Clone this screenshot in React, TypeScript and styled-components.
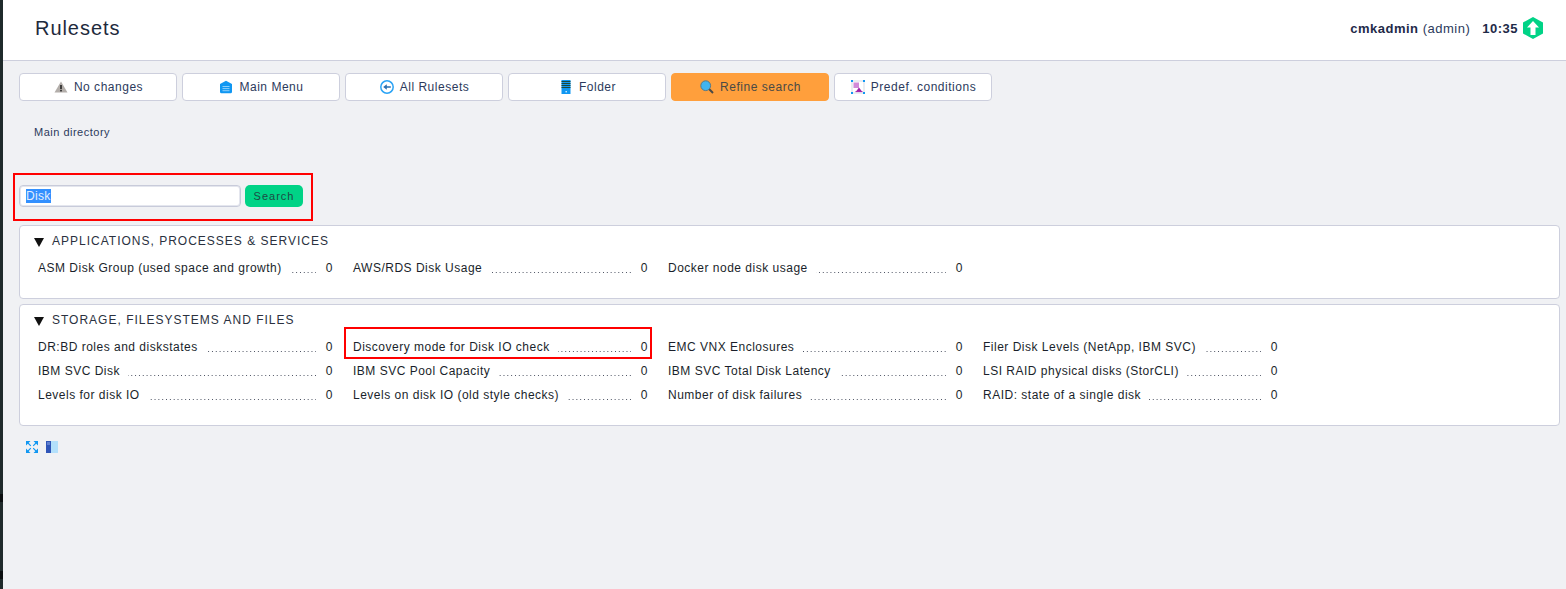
import React, { FC, useEffect, useRef } from "react";
import styled, { createGlobalStyle } from "styled-components";

const GlobalStyle = createGlobalStyle`
  html, body {
    margin: 0;
    padding: 0;
    height: 100%;
    background: #f0f1f4;
    font-family: "Liberation Sans", Arial, sans-serif;
    overflow: hidden;
  }
`;

const Page = styled.div`
  display: flex;
  height: 589px;
`;

const Strip = styled.div`
  width: 3px;
  flex: none;
  background: linear-gradient(
    to bottom,
    #1f2a2b 0 494px,
    #0b0f10 494px 502px,
    #1f2a2b 502px 571px,
    #0b0f10 571px 579px,
    #1f2a2b 579px
  );
`;

const Main = styled.div`
  flex: 1;
  min-width: 0;
  display: flex;
  flex-direction: column;
`;

const Header = styled.header`
  height: 56px;
  box-sizing: content-box;
  background: #fff;
  border-bottom: 1px solid #cdcfdd;
  display: flex;
  align-items: center;
  justify-content: space-between;
  padding: 0 23px 4px 32px;
`;

const Title = styled.h1`
  margin: 0;
  font-size: 20px;
  font-weight: 400;
  letter-spacing: 0.95px;
  color: #1e2a3c;
`;

const UserInfo = styled.div`
  display: flex;
  align-items: center;
  font-size: 13px;
  letter-spacing: 0.5px;
  color: #1e2a48;
`;

const UserName = styled.span`
  b {
    font-weight: 700;
  }
  span {
    color: #2c3a5c;
  }
`;

const Clock = styled.b`
  margin-left: 12px;
  font-weight: 700;
`;

const Badge = styled.svg`
  margin-left: 5px;
  width: 20px;
  height: 22px;
`;

const Content = styled.div`
  padding: 12px 6px 0 16px;
`;

const Toolbar = styled.nav`
  display: flex;
  gap: 5px;
`;

const ToolButton = styled.button<{ $active?: boolean }>`
  width: 158px;
  height: 28px;
  box-sizing: border-box;
  padding: 0 0 0 1px;
  display: flex;
  align-items: center;
  justify-content: center;
  gap: 6px;
  border-radius: 4px;
  border: 1px solid ${(p) => (p.$active ? "#ff9f3c" : "#cdcfdd")};
  background: ${(p) => (p.$active ? "#ff9f3c" : "#fff")};
  color: ${(p) => (p.$active ? "#4a4a46" : "#2c3a5c")};
  font-family: inherit;
  font-size: 12px;
  letter-spacing: 0.52px;
`;

const Breadcrumb = styled.div`
  margin: 25px 0 0 15px;
  height: 13px;
  line-height: 13px;
  font-size: 11px;
  letter-spacing: 0.5px;
  color: #2c3a5c;
`;

const SearchForm = styled.form`
  position: relative;
  display: flex;
  gap: 4px;
  margin: 46px 0 18px;
  width: 284px;

  &::after {
    content: "";
    position: absolute;
    left: -6px;
    top: -12px;
    width: 300px;
    height: 48px;
    box-sizing: border-box;
    border: 2px solid #f00;
    pointer-events: none;
  }
`;

const SearchInput = styled.input`
  width: 222px;
  height: 22px;
  box-sizing: border-box;
  padding: 0 6px;
  border: 1px solid #c8cbda;
  box-shadow: inset 0 0 0 1px #e4e6ee;
  border-radius: 4px;
  outline: none;
  background: #fff;
  font-family: inherit;
  font-size: 12px;
  letter-spacing: 0.3px;
  color: #2c3a5c;

  &::selection {
    background: #3390ff;
    color: #e4eefc;
  }
`;

const SearchButton = styled.button`
  width: 58px;
  height: 22px;
  padding: 0;
  border: none;
  border-radius: 5px;
  background: #00d386;
  color: #1d4a44;
  font-family: inherit;
  font-size: 11px;
  letter-spacing: 1px;
`;

const Section = styled.section<{ $height: number }>`
  box-sizing: border-box;
  height: ${(p) => p.$height}px;
  margin-bottom: 5px;
  padding: 8px 18px 0;
  background: #fff;
  border: 1px solid #cdcfdd;
  border-radius: 4px;
`;

const SectionTitle = styled.h2`
  margin: 0;
  display: flex;
  align-items: center;
  height: 14px;
  margin-left: -4px;
  font-size: 12px;
  font-weight: 400;
  letter-spacing: 1px;
  text-transform: uppercase;
  color: #2a3140;
`;

const Arrow = styled.svg`
  width: 10px;
  height: 9px;
  margin-right: 8px;
  margin-top: 2px;
`;

const RuleGrid = styled.div`
  display: grid;
  grid-template-columns: repeat(4, 295px);
  column-gap: 20px;
  grid-auto-rows: 24px;
  margin-top: 13px;
`;

const Rule = styled.a<{ $marked?: boolean }>`
  position: relative;
  display: flex;
  align-items: center;
  height: 14px;
  font-size: 12px;
  letter-spacing: 0.5px;
  color: #1a1f2b;
  white-space: nowrap;

  ${(p) =>
    p.$marked &&
    `
    &::after {
      content: "";
      position: absolute;
      left: -9px;
      top: -13px;
      width: 308px;
      height: 32px;
      box-sizing: border-box;
      border: 2px solid #f00;
    }
  `}
`;

const Leader = styled.span`
  flex: 1;
  min-width: 0;
  height: 14px;
  margin: 0 9px 0 8px;
  background-image: linear-gradient(to left, #4a5060 1.3px, transparent 1.3px);
  background-size: 3.83px 1px;
  background-repeat: repeat-x;
  background-position: right 0 top 11px;
`;

const Count = styled.span`
  width: 8px;
  flex: none;
  text-align: right;
`;

const Footer = styled.div`
  display: flex;
  gap: 8px;
  margin: 15px 0 0 7px;
`;

const Icon = styled.svg`
  width: 14px;
  height: 14px;
  flex: none;
`;

const SmallIcon = styled.svg`
  width: 12px;
  height: 12px;
  flex: none;
`;

const WarningIcon = () => (
  <Icon viewBox="0 0 14 14">
    <path d="M7 1.500 13.500 12.500H.5Z" fill="#b3aeaa" />
    <rect x="6.200" y="5" width="1.600" height="4" fill="#222" />
    <rect x="6.200" y="9.800" width="1.600" height="1.600" fill="#222" />
  </Icon>
);

const MenuIcon = () => (
  <Icon viewBox="0 0 14 14">
    <path d="M7 .8 13 4v8a1.400 1.400 0 0 1-1.400 1.200H2.400A1.400 1.400 0 0 1 1 12V4Z" fill="#1097f2" />
    <path d="M3.500 6.500h7M3.500 8.600h7M3.500 10.700h7" stroke="#8fd0fa" strokeWidth="1" />
  </Icon>
);

const BackIcon = () => (
  <Icon viewBox="0 0 14 14">
    <circle cx="7" cy="7" r="6.200" fill="#fff" stroke="#2aa3f5" strokeWidth="1.500" />
    <path d="M3.200 7 6.800 4.200v2h4v1.600h-4v2Z" fill="#2a6fb0" />
  </Icon>
);

const FolderIcon = () => (
  <Icon viewBox="0 0 14 14">
    <rect x="2.500" y="0" width="9" height="14" fill="#1097f2" />
    <path d="M2.500 1.500h9M2.500 3.500h9M2.500 5.500h9M2.500 7.500h9" stroke="#1f4a3a" strokeWidth="1" />
    <rect x="6.500" y="11" width="1.400" height="1.400" fill="#d8f0ff" />
  </Icon>
);

const SearchIcon = () => (
  <Icon viewBox="0 0 14 14">
    <path d="m8.800 8.800 4.200 4.200" stroke="#4a4a46" strokeWidth="2" />
    <circle cx="5.700" cy="5.700" r="4.900" fill="#41b4f0" stroke="#5a7a86" strokeWidth="1" />
  </Icon>
);

const PredefIcon = () => (
  <Icon viewBox="0 0 14 14">
    <rect x="1" y="1" width="12" height="12" fill="none" stroke="#c7c9d6" strokeWidth="0.7" />
    <rect x="2.500" y="2.500" width="5.500" height="5.500" fill="#d28ad8" />
    <path d="M8 7.500 11 11.500H5Z" fill="#a020a8" />
    <path d="M4.500 11.600h7" stroke="#a020a8" strokeWidth="1" />
    <rect x="0" y="0" width="2" height="2" fill="#1097f2" />
    <rect x="12" y="0" width="2" height="2" fill="#1097f2" />
    <rect x="0" y="12" width="2" height="2" fill="#1097f2" />
    <rect x="12" y="12" width="2" height="2" fill="#1097f2" />
  </Icon>
);

const ExpandIcon = () => (
  <SmallIcon viewBox="0 0 12 12">
    <path d="M0 0h4.500L0 4.500ZM12 0v4.500L7.500 0ZM0 12V7.500L4.500 12ZM12 12H7.500L12 7.500Z" fill="#1097f2" />
    <path d="M2 2l2.800 2.800M10 2 7.200 4.800M2 10l2.800-2.800M10 10 7.200 7.200" stroke="#1097f2" strokeWidth="1.100" />
  </SmallIcon>
);

const PanelIcon = () => (
  <SmallIcon viewBox="0 0 12 12">
    <rect x="5" y="0" width="7" height="12" fill="#b3e0fb" />
    <rect x="0" y="0" width="5" height="12" fill="#2f55b8" />
    <rect x="1" y="1" width="3" height="3" fill="#5f7fcf" />
  </SmallIcon>
);

const buttons: { label: string; icon: React.ReactNode; active?: boolean }[] = [
  { label: "No changes", icon: <WarningIcon /> },
  { label: "Main Menu", icon: <MenuIcon /> },
  { label: "All Rulesets", icon: <BackIcon /> },
  { label: "Folder", icon: <FolderIcon /> },
  { label: "Refine search", icon: <SearchIcon />, active: true },
  { label: "Predef. conditions", icon: <PredefIcon /> },
];

const sections = [
  {
    title: "Applications, Processes & Services",
    height: 74,
    rules: ["ASM Disk Group (used space and growth)", "AWS/RDS Disk Usage", "Docker node disk usage"],
  },
  {
    title: "Storage, Filesystems and Files",
    height: 122,
    rules: [
      "DR:BD roles and diskstates",
      "Discovery mode for Disk IO check",
      "EMC VNX Enclosures",
      "Filer Disk Levels (NetApp, IBM SVC)",
      "IBM SVC Disk",
      "IBM SVC Pool Capacity",
      "IBM SVC Total Disk Latency",
      "LSI RAID physical disks (StorCLI)",
      "Levels for disk IO",
      "Levels on disk IO (old style checks)",
      "Number of disk failures",
      "RAID: state of a single disk",
    ],
  },
];

const App: FC = () => {
  const inputRef = useRef<HTMLInputElement>(null);

  useEffect(() => {
    inputRef.current?.focus();
    inputRef.current?.select();
  }, []);

  return (
    <Page>
      <GlobalStyle />
      <Strip />
      <Main>
        <Header>
          <Title>Rulesets</Title>
          <UserInfo>
            <UserName>
              <b>cmkadmin</b> <span>(admin)</span>
            </UserName>
            <Clock>10:35</Clock>
            <Badge viewBox="0 0 20 22">
              <path d="M10 0 20 5.500v11L10 22 0 16.500V5.500Z" fill="#00d386" />
              <path d="M10 4 16 10.500H12.500V18h-5V10.500H4Z" fill="#fff" />
            </Badge>
          </UserInfo>
        </Header>
        <Content>
          <Toolbar>
            {buttons.map((b) => (
              <ToolButton key={b.label} type="button" $active={b.active}>
                {b.icon}
                {b.label}
              </ToolButton>
            ))}
          </Toolbar>
          <Breadcrumb>Main directory</Breadcrumb>
          <SearchForm onSubmit={(e) => e.preventDefault()}>
            <SearchInput ref={inputRef} defaultValue="Disk" />
            <SearchButton type="submit">Search</SearchButton>
          </SearchForm>
          {sections.map((s) => (
            <Section key={s.title} $height={s.height}>
              <SectionTitle>
                <Arrow viewBox="0 0 10 9">
                  <path d="M0 0h10L5 9Z" fill="#111" />
                </Arrow>
                {s.title}
              </SectionTitle>
              <RuleGrid>
                {s.rules.map((r) => (
                  <Rule key={r} $marked={r.startsWith("Discovery")}>
                    {r}
                    <Leader />
                    <Count>0</Count>
                  </Rule>
                ))}
              </RuleGrid>
            </Section>
          ))}
          <Footer>
            <ExpandIcon />
            <PanelIcon />
          </Footer>
        </Content>
      </Main>
    </Page>
  );
};

export default App;
